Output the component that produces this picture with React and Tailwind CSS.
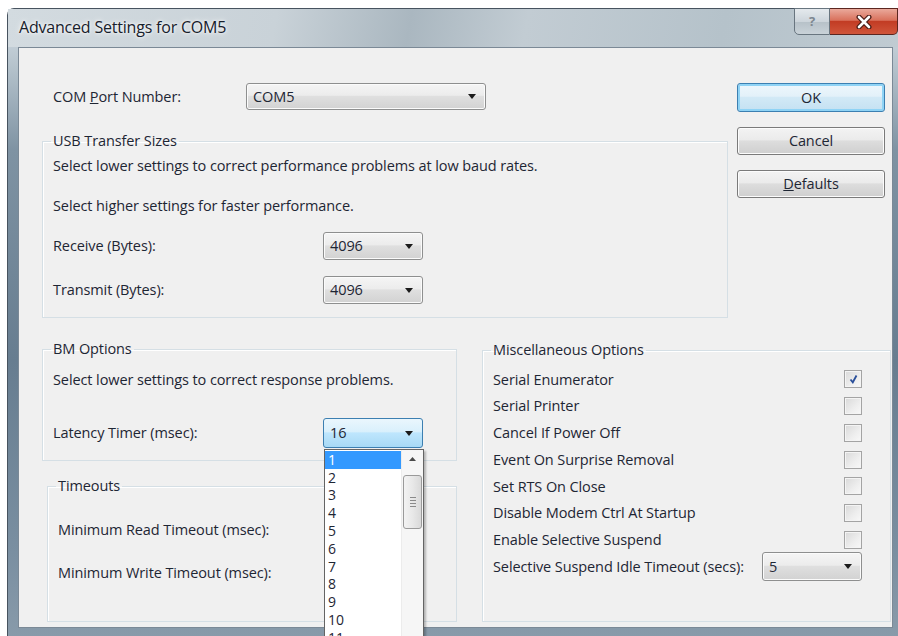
import React from 'react';
import clsx from 'clsx';

const FONT = "font-['Open_Sans','Noto_Sans',sans-serif]";

const Arrow = () => (
  <svg width="8" height="5" viewBox="0 0 8 5" className="shrink-0">
    <path d="M0 0h8L4 5z" fill="#1b1b1b" />
  </svg>
);

const Combo = ({ value, focused, className }) => (
  <div
    className={clsx(
      'flex items-center justify-between rounded-[3px] border pl-[6px] pr-[9px]',
      focused
        ? 'border-[#3c7fb1] bg-[linear-gradient(180deg,#eaf6fd_0%,#d9f0fc_45%,#bee6fd_50%,#a7d9f5_100%)]'
        : 'border-[#8e8f8f] bg-[linear-gradient(180deg,#f5f5f5_0%,#ececec_45%,#dfdfdf_50%,#d2d2d2_100%)] shadow-[inset_0_0_0_1px_#fbfbfb]',
      className
    )}
  >
    <span>{value}</span>
    <Arrow />
  </div>
);

const Button = ({ children, primary, className }) => (
  <div
    className={clsx(
      'flex items-center justify-center rounded-[3px] border',
      primary
        ? 'border-[#3c7fb1] bg-[linear-gradient(180deg,#eef7fc_0%,#e3f1f9_45%,#d2e9f6_50%,#c4e1f2_100%)] shadow-[inset_0_0_0_2px_#8fd3f5]'
        : 'border-[#7a7a7a] bg-[linear-gradient(180deg,#f3f3f3_0%,#ebebeb_45%,#dddddd_50%,#cfcfcf_100%)] shadow-[inset_0_0_0_1px_#fcfcfc]',
      className
    )}
  >
    {children}
  </div>
);

const Check = ({ checked }) => (
  <span className="flex h-[18px] w-[18px] items-center justify-center border border-[#a4a4a4] bg-[linear-gradient(135deg,#d9d9d9_0%,#eeeeee_60%,#f8f8f8_100%)] shadow-[inset_0_0_0_1px_#f4f4f4]">
    {checked && (
      <svg width="9" height="10" viewBox="0 0 9 10">
        <path d="M1.5 5.5l2.3 2.8L7.5 1.5" fill="none" stroke="#2a4f9a" strokeWidth="1.8" />
      </svg>
    )}
  </span>
);

const Group = ({ title, className, children }) => (
  <fieldset className={clsx('border border-[#d5dfe5] pl-[8px] shadow-[inset_1px_1px_0_#ffffff]', className)}>
    <legend className="px-[2px] leading-[16px]">{title}</legend>
    <div className="ml-[2px] flex flex-col">{children}</div>
  </fieldset>
);

const miscOptions = [
  ['Serial Enumerator', true],
  ['Serial Printer', false],
  ['Cancel If Power Off', false],
  ['Event On Surprise Removal', false],
  ['Set RTS On Close', false],
  ['Disable Modem Ctrl At Startup', false],
  ['Enable Selective Suspend', false],
];

const latencyValues = Array.from({ length: 12 }, (_, i) => i + 1);

export default function App() {
  return (
    <div className={clsx('relative h-[636px] w-[898px] overflow-hidden bg-white pl-[7px] pt-[8px] text-[14.5px] tracking-[-0.1px] text-[#1e2634]', FONT)}>
      {/* window frame */}
      <div className="flex h-[640px] w-[893px] flex-col rounded-tl-[7px] rounded-tr-[7px] border-l border-t border-[#47535f] bg-[linear-gradient(180deg,#d8e0e6_0%,#b9c6cf_8%,#7f93a3_22%,#677d90_55%,#7a8fa1_85%,#8a9cab_100%)]">
        {/* title bar */}
        <div className="relative flex h-[38px] items-start bg-[linear-gradient(100deg,#d3dbe0_0%,#c9d2d8_30%,#aab7c0_45%,#c2ccd3_58%,#b5c2ca_80%,#c0cbd2_100%)]">
          <span className="pl-[11px] pt-[8px] text-[16px] leading-[20px] tracking-[-0.2px] text-[#17202b] [text-shadow:0_0_6px_#ffffff,0_0_3px_#ffffff]">
            Advanced Settings for COM5
          </span>
          <div className="ml-auto mr-[2px] flex h-[27px] -mt-[1px]">
            <div className="flex w-[36px] items-center justify-center rounded-bl-[5px] border border-[#68757f] bg-[linear-gradient(180deg,#e4e9ed_0%,#cdd5db_50%,#b6c1c8_51%,#c9d2d8_100%)]">
              <span className="text-[13px] font-bold leading-none text-[#7d8790]">?</span>
            </div>
            <div className="flex w-[68px] items-center justify-center rounded-br-[5px] border border-l-0 border-[#5b2620] bg-[linear-gradient(180deg,#eaa99b_0%,#d9715c_45%,#c23c24_50%,#d0553a_100%)]">
              <svg width="16" height="14" viewBox="0 0 16 14">
                <path d="M3 2l10 10M13 2L3 12" stroke="#4a1c16" strokeWidth="5" strokeLinecap="round" />
                <path d="M3 2l10 10M13 2L3 12" stroke="#ffffff" strokeWidth="2.6" strokeLinecap="round" />
              </svg>
            </div>
          </div>
        </div>

        {/* client area */}
        <div className="ml-[10px] h-[581px] w-[875px] border border-[#7b8996] bg-[#f0f0f0] pl-[23px] pt-[35px]">
          <div className="flex gap-[9px]">
            <div className="flex w-[686px] flex-col">
              <div className="flex h-[27px] items-center">
                <span className="ml-[11px] w-[193px]">
                  COM <u>P</u>ort Number:
                </span>
                <Combo value="COM5" className="h-[27px] w-[240px]" />
              </div>

              <Group title="USB Transfer Sizes" className="mt-[23px] h-[185px] w-[686px]">
                <div className="mt-[7px] flex h-[20px] items-center">
                  Select lower settings to correct performance problems at low baud rates.
                </div>
                <div className="mt-[20px] flex h-[20px] items-center">
                  Select higher settings for faster performance.
                </div>
                <div className="mt-[16px] flex h-[28px] items-center">
                  <span className="w-[270px]">Receive (Bytes):</span>
                  <Combo value="4096" className="h-[28px] w-[100px]" />
                </div>
                <div className="mt-[16px] flex h-[28px] items-center">
                  <span className="w-[270px]">Transmit (Bytes):</span>
                  <Combo value="4096" className="h-[28px] w-[100px]" />
                </div>
              </Group>
            </div>

            <div className="flex w-[148px] flex-col">
              <Button primary className="h-[29px]">OK</Button>
              <Button className="mt-[15px] h-[28px]">Cancel</Button>
              <Button className="mt-[15px] h-[28px]">
                <span>
                  <u>D</u>efaults
                </span>
              </Button>
            </div>
          </div>

          <div className="mt-[23px] flex gap-[25px]">
            <div className="flex w-[415px] flex-col">
              <Group title="BM Options" className="h-[120px] w-[415px]">
                <div className="mt-[13px] flex h-[20px] items-center">
                  Select lower settings to correct response problems.
                </div>
                <div className="mt-[28px] flex h-[30px] items-center">
                  <span className="w-[270px]">Latency Timer (msec):</span>
                  <Combo value="16" focused className="h-[30px] w-[100px]" />
                </div>
              </Group>

              <Group title="Timeouts" className="ml-[5px] mt-[17px] h-[144px] w-[410px]">
                <div className="mt-[26px] flex h-[20px] items-center">Minimum Read Timeout (msec):</div>
                <div className="mt-[23px] flex h-[20px] items-center">Minimum Write Timeout (msec):</div>
              </Group>
            </div>

            <Group title="Miscellaneous Options" className="mt-[1px] h-[280px] w-[405px]">
              <div className="mt-[8px] flex flex-col pr-[28px]">
                {miscOptions.map(([label, checked]) => (
                  <div key={label} className="flex h-[26.75px] items-center justify-between">
                    <span>{label}</span>
                    <Check checked={checked} />
                  </div>
                ))}
                <div className="flex h-[26.75px] items-center">
                  <span className="w-[269px] whitespace-nowrap">Selective Suspend Idle Timeout (secs):</span>
                  <Combo value="5" className="h-[29px] w-[100px]" />
                </div>
              </div>
            </Group>
          </div>
        </div>
      </div>

      {/* open latency list */}
      <div className="absolute left-[324px] top-[449px] flex h-[200px] w-[100px] border border-[#646464] bg-white text-[14px] shadow-[2px_2px_2px_rgba(0,0,0,0.25)]">
        <div className="flex flex-1 flex-col pt-[1px]">
          {latencyValues.map((n) => (
            <div
              key={n}
              className={clsx(
                'flex h-[17.8px] shrink-0 items-center pl-[3px] leading-none',
                n === 1 && 'bg-[#3399ff] text-white'
              )}
            >
              {n}
            </div>
          ))}
        </div>
        <div className="flex w-[22px] flex-col items-center border-l border-[#ececec] bg-[#f6f6f6] pt-[7px]">
          <svg width="7" height="4" viewBox="0 0 7 4">
            <path d="M0 4h7L3.5 0z" fill="#4a4a4a" />
          </svg>
          <div className="mt-[14px] flex h-[54px] w-[19px] items-center justify-center rounded-[3px] border border-[#9a9a9a] bg-[linear-gradient(90deg,#f3f3f3_0%,#e8e8e8_50%,#d9d9d9_100%)]">
            <div className="flex flex-col gap-[2px]">
              <span className="h-px w-[6px] bg-[#8a8a8a]" />
              <span className="h-px w-[6px] bg-[#8a8a8a]" />
              <span className="h-px w-[6px] bg-[#8a8a8a]" />
              <span className="h-px w-[6px] bg-[#8a8a8a]" />
            </div>
          </div>
        </div>
      </div>
    </div>
  );
}
